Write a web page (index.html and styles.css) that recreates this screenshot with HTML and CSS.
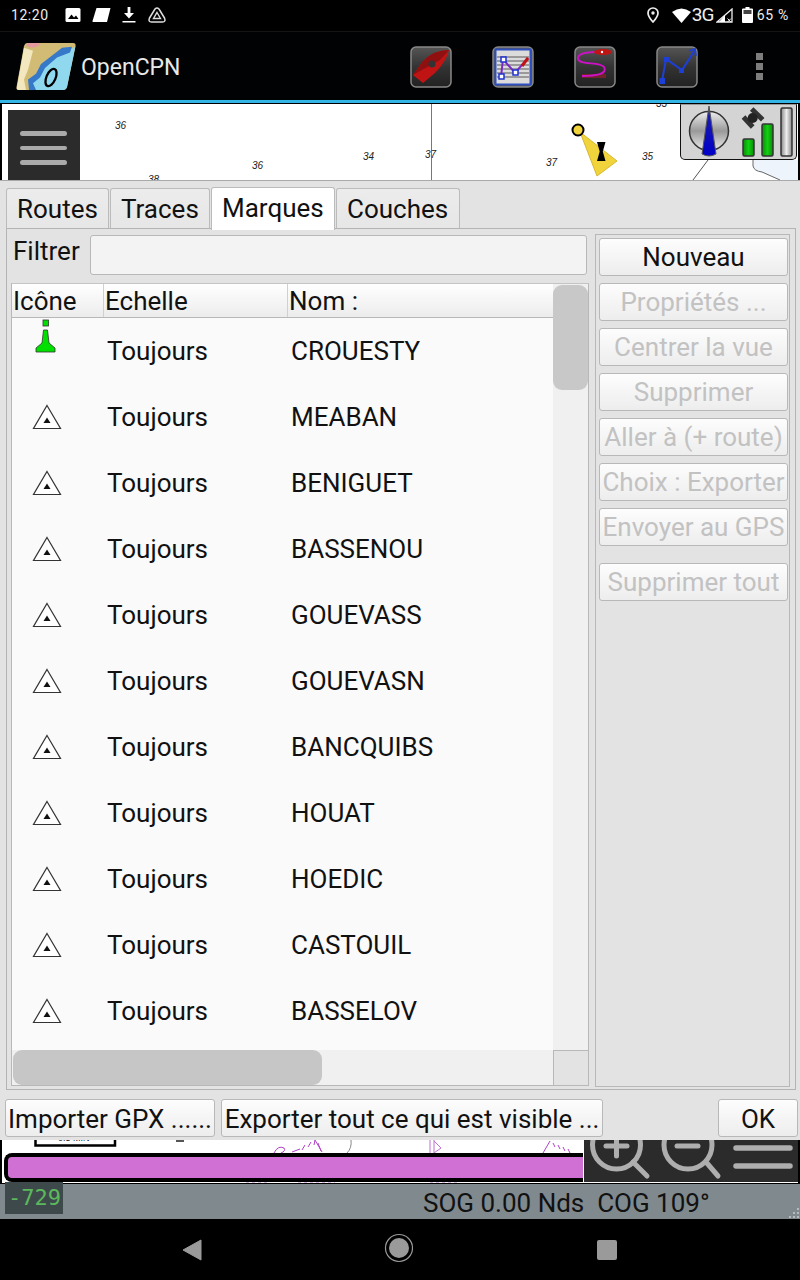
FILE: index.html
```html
<!DOCTYPE html>
<html lang="fr">
<head>
<meta charset="utf-8">
<title>OpenCPN</title>
<link rel="stylesheet" href="styles.css">
</head>
<body>
<svg class="defs" width="0" height="0">
  <symbol id="tri" viewBox="0 0 30 26">
    <path d="M15 1.500 L28.500 24.500 H1.500 Z" fill="#fff" stroke="#333" stroke-width="1.200"/>
    <path d="M15 13.500 L18.500 19 H11.500 Z" fill="#111"/>
  </symbol>
  <linearGradient id="gbtn" x1="0" y1="0" x2="0" y2="1"><stop offset="0" stop-color="#555"/><stop offset=".5" stop-color="#333"/><stop offset="1" stop-color="#222"/></linearGradient>
  <linearGradient id="gdial" x1="0" y1="0" x2="0" y2="1"><stop offset="0" stop-color="#eee"/><stop offset=".5" stop-color="#999"/><stop offset="1" stop-color="#eee"/></linearGradient>
  <linearGradient id="gbar" x1="0" y1="0" x2="1" y2="0"><stop offset="0" stop-color="#0a8a0a"/><stop offset=".5" stop-color="#11d011"/><stop offset="1" stop-color="#0a8a0a"/></linearGradient>
  <linearGradient id="gbar2" x1="0" y1="0" x2="1" y2="0"><stop offset="0" stop-color="#888"/><stop offset=".5" stop-color="#eee"/><stop offset="1" stop-color="#888"/></linearGradient>
  <linearGradient id="gneedle" x1="0" y1="0" x2="0" y2="1"><stop offset="0" stop-color="#555"/><stop offset=".2" stop-color="#1a1ab0"/><stop offset="1" stop-color="#0000c8"/></linearGradient>
</svg>

<header class="statusbar">
  <div class="status-left">
    <span class="clock">12:20</span>
    <svg class="si" width="16" height="16" viewBox="0 0 16 16"><rect x="0.500" y="1" width="15" height="14" rx="1.500" fill="#fff"/><path d="M3 12 L6.500 7.500 L9 10.500 L11 8.500 L13.500 12 Z" fill="#000"/></svg>
    <svg class="si" width="19" height="16" viewBox="0 0 19 16"><path d="M4.500 1 H18.500 L15 15 H1 Q0.300 15 .5 14 Z" fill="#fff"/></svg>
    <svg class="si" width="14" height="16" viewBox="0 0 14 16"><path d="M5.600 0 H8.400 V6 H12 L7 11.500 L2 6 H5.600 Z M0.500 14 H13.500 V15.500 H0.500 Z" fill="#fff"/></svg>
    <svg class="si" width="18" height="16" viewBox="0 0 18 16"><path d="M7 2 Q9 0 11 2 L16.500 11 Q18 15 14.500 15 H3.500 Q0 15 1.500 11 Z" fill="none" stroke="#ddd" stroke-width="1.500" stroke-linejoin="round"/><path d="M9 5.500 L12.500 11.500 H5.500 Z" fill="none" stroke="#ddd" stroke-width="1.400"/></svg>
  </div>
  <div class="status-right">
    <svg class="s-pin" width="12" height="16" viewBox="0 0 12 16"><path d="M6 1 C3 1 1 3.300 1 6 C1 9.500 6 15 6 15 C6 15 11 9.500 11 6 C11 3.300 9 1 6 1 Z" fill="none" stroke="#eee" stroke-width="1.700"/><circle cx="6" cy="6" r="1.700" fill="#eee"/></svg>
    <svg class="s-wifi" width="19" height="15" viewBox="0 0 19 15"><path d="M0 4 Q9.500 -3 19 4 L9.500 15 Z" fill="#fff"/></svg>
    <span class="g3">3G</span>
    <svg class="s-sig" width="17" height="15" viewBox="0 0 17 15"><path d="M16 1 V14 H1 Z" fill="none" stroke="#eee" stroke-width="1.300"/><path d="M9 7 V14 H3 Z" fill="#fff"/><path d="M11.500 10.500 L15 14 M15 10.500 L11.500 14" stroke="#eee" stroke-width="1"/></svg>
    <svg class="s-bat" width="11" height="16" viewBox="0 0 11 16"><path d="M3.500 0 H7.500 V1.500 H10 Q11 1.500 11 2.500 V15 Q11 16 10 16 H1 Q0 16 0 15 V2.500 Q0 1.500 1 1.500 H3.500 Z" fill="#fff"/><rect x="1.500" y="3" width="8" height="4" fill="#444"/></svg>
    <span class="batt">65 %</span>
  </div>
</header>

<div class="appbar">
  <svg class="logo" width="60" height="47" viewBox="0 0 60 49" preserveAspectRatio="none">
    <path d="M11 0 H57 Q60 0 59.500 3 L51 46 Q50 49 47 49 H3 Q0 49 .5 46 L8 3 Q9 0 11 0 Z" fill="#d2bb74"/>
    <path d="M1 46 L8 5 L17 8 L12 28 L8 38 L10 49 H3 Q0 49 1 46 Z" fill="#f2e7bf"/>
    <path d="M58 5 L40 14 L27 26 L22 36 L14 42 L17 49 H47 Q50 49 51 46 L59.500 3 Z" fill="#8fd8ee"/>
    <path d="M56 4 L46 5 L40 10 L25 22 L20 32 L12 38 L13 49 H20 L17 42 L24 36 L29 26 L41 15 L54 10 Z" fill="#3679c9"/>
    <path d="M10 2 Q16 8 25 1 L20 0 H12 Z" fill="#e59aa0"/>
    <ellipse cx="35" cy="36" rx="4.600" ry="9.500" transform="rotate(22 35 36)" fill="none" stroke="#000" stroke-width="2.300"/>
  </svg>
  <span class="app-title">OpenCPN</span>
  <div class="tools">
    <svg class="tool" width="42" height="42" viewBox="0 0 42 42"><rect x="1" y="1" width="40" height="40" rx="5" fill="url(#gbtn)" stroke="#888" stroke-width="1.500"/><path d="M39 4 Q24 4 13 15 L3 29 L13 37 L25 27 Q36 16 39 4 Z" fill="#c01414"/><path d="M39 4 Q24 4 13 15 L3 29 L30 14 Z" fill="#8f1010"/><circle cx="22" cy="18" r="3.500" fill="#333"/></svg>
    <svg class="tool" width="42" height="42" viewBox="0 0 42 42"><rect x="1" y="1" width="40" height="40" rx="5" fill="#555" stroke="#888" stroke-width="1.500"/><rect x="3.500" y="3.500" width="35" height="35" fill="#dcdcdc" stroke="#2f4fc0" stroke-width="2"/><path d="M5 11 H37 M5 15 H37 M5 19 H37 M5 23 H37 M5 27 H37 M5 31 H37" stroke="#9a9a9a" stroke-width="1.800"/><path d="M9 31 L11 13 L23 27 L36 12" fill="none" stroke="#7c28c8" stroke-width="2"/><path d="M30 20 L36 12" stroke="#c01414" stroke-width="3"/><rect x="7" y="28" width="5" height="5" fill="#fff" stroke="#2030d0" stroke-width="1.500"/><rect x="9" y="11" width="5" height="5" fill="#fff" stroke="#2030d0" stroke-width="1.500"/><rect x="21" y="24" width="5" height="5" fill="#fff" stroke="#2030d0" stroke-width="1.500"/></svg>
    <svg class="tool" width="42" height="42" viewBox="0 0 42 42"><rect x="1" y="1" width="40" height="40" rx="5" fill="url(#gbtn)" stroke="#888" stroke-width="1.500"/><path d="M8 30 H32" stroke="#a0202a" stroke-width="4" opacity=".6"/><path d="M8 30 C22 30 34 28 30 21 C26 15 4 20 4 12 C4 7 16 6 24 6" fill="none" stroke="#d010c8" stroke-width="2"/><ellipse cx="29" cy="6" rx="9" ry="3" fill="#c01414"/><circle cx="28" cy="6" r="1.200" fill="#fff"/></svg>
    <svg class="tool" width="42" height="42" viewBox="0 0 42 42"><rect x="1" y="1" width="40" height="40" rx="5" fill="url(#gbtn)" stroke="#888" stroke-width="1.500"/><path d="M6 35 L10 13 L26 24 L39 4" fill="none" stroke="#1c3fd8" stroke-width="2"/><path d="M33 5 L39 3 L40 10" fill="none" stroke="#1c3fd8" stroke-width="1.800"/><rect x="3.500" y="32" width="5.500" height="6" fill="#1c3fd8"/><rect x="8" y="11" width="5" height="5" fill="#1c3fd8"/><rect x="23" y="22" width="5" height="5" fill="#1c3fd8"/></svg>
    <span class="overflow"><i></i><i></i><i></i></span>
  </div>
</div>
<div class="accent"></div>

<div class="chart-top">
  <div class="menu-panel"><i></i><i></i><i></i></div>
  <span class="meridian"></span>
  <span class="sound s1">36</span><span class="sound s2">36</span><span class="sound s3">34</span><span class="sound s4">37</span><span class="sound s5">37</span><span class="sound s6">35</span><span class="sound s7">33</span><span class="sound s8">38</span>
  <svg class="buoy" width="56" height="60" viewBox="0 0 56 60">
    <path d="M14 12 L51 41 L31 56 Z" fill="#f1d33c" stroke="#d8b92e" stroke-width="1"/>
    <path d="M31 22 H39.500 L36.800 31.500 L39.500 41 H31 L33.700 31.500 Z" fill="#000"/>
    <circle cx="12" cy="10" r="5.500" fill="#f1d33c" stroke="#000" stroke-width="2"/>
  </svg>
  <svg class="coast" width="116" height="28" viewBox="0 0 116 28">
    <path d="M71 8 V14 Q72 19 80 20 L98 28 H116 V8 Z" fill="#eef4fc"/>
    <path d="M71 8 V14 Q72 19 80 20 L98 28" fill="none" stroke="#666" stroke-width="1"/>
    <path d="M26 8 L11 28" fill="none" stroke="#555" stroke-width="1"/>
  </svg>
  <div class="gps-panel">
    <svg width="115" height="54" viewBox="0 0 115 54">
      <circle cx="28" cy="26" r="19.500" fill="url(#gdial)" stroke="#333" stroke-width="1.500"/>
      <path d="M28 1 L35 49 Q28 53 21 49 Z" fill="url(#gneedle)" stroke="#555" stroke-width="1"/>
      <path d="M62.500 12 L71.700 22 M70.700 4 L81.700 14.700" stroke="#333" stroke-width="5"/>
      <circle cx="71.700" cy="13" r="5" fill="#222"/>
      <rect x="62" y="34" width="11" height="17" rx="1.500" fill="url(#gbar)" stroke="#333" stroke-width="1.500"/>
      <rect x="81" y="19" width="11" height="32" rx="1.500" fill="url(#gbar)" stroke="#333" stroke-width="1.500"/>
      <rect x="100" y="3" width="11" height="48" rx="1.500" fill="url(#gbar2)" stroke="#333" stroke-width="1.500"/>
    </svg>
  </div>
</div>

<main class="dialog">
  <nav class="tabs">
    <span class="tab">Routes</span><span class="tab">Traces</span><span class="tab active">Marques</span><span class="tab">Couches</span>
  </nav>
  <section class="panel">
    <div class="left-col">
      <div class="filter">
        <label class="filter-label">Filtrer</label>
        <div class="filter-input"></div>
      </div>
      <div class="list">
        <div class="list-main">
          <div class="list-view">
            <div class="list-head">
              <span class="h-icon">Icône</span><span class="h-scale">Echelle</span><span class="h-name">Nom :</span>
            </div>
            <div class="row">
              <span class="c-icon"><svg class="green" width="22" height="34" viewBox="0 0 22 34"><rect x="8" y="1" width="5.500" height="6" fill="#00e000" stroke="#333" stroke-width=".8"/><path d="M8.500 11 H12.500 L14 24 L20 29 V33 H1 V29 L7 24 Z" fill="#00e000" stroke="#333" stroke-width=".8"/></svg></span>
              <span class="c-scale">Toujours</span><span class="c-name">CROUESTY</span>
            </div>
            <div class="row"><span class="c-icon"><svg class="mark" width="30" height="26"><use href="#tri"/></svg></span><span class="c-scale">Toujours</span><span class="c-name">MEABAN</span></div>
            <div class="row"><span class="c-icon"><svg class="mark" width="30" height="26"><use href="#tri"/></svg></span><span class="c-scale">Toujours</span><span class="c-name">BENIGUET</span></div>
            <div class="row"><span class="c-icon"><svg class="mark" width="30" height="26"><use href="#tri"/></svg></span><span class="c-scale">Toujours</span><span class="c-name">BASSENOU</span></div>
            <div class="row"><span class="c-icon"><svg class="mark" width="30" height="26"><use href="#tri"/></svg></span><span class="c-scale">Toujours</span><span class="c-name">GOUEVASS</span></div>
            <div class="row"><span class="c-icon"><svg class="mark" width="30" height="26"><use href="#tri"/></svg></span><span class="c-scale">Toujours</span><span class="c-name">GOUEVASN</span></div>
            <div class="row"><span class="c-icon"><svg class="mark" width="30" height="26"><use href="#tri"/></svg></span><span class="c-scale">Toujours</span><span class="c-name">BANCQUIBS</span></div>
            <div class="row"><span class="c-icon"><svg class="mark" width="30" height="26"><use href="#tri"/></svg></span><span class="c-scale">Toujours</span><span class="c-name">HOUAT</span></div>
            <div class="row"><span class="c-icon"><svg class="mark" width="30" height="26"><use href="#tri"/></svg></span><span class="c-scale">Toujours</span><span class="c-name">HOEDIC</span></div>
            <div class="row"><span class="c-icon"><svg class="mark" width="30" height="26"><use href="#tri"/></svg></span><span class="c-scale">Toujours</span><span class="c-name">CASTOUIL</span></div>
            <div class="row"><span class="c-icon"><svg class="mark" width="30" height="26"><use href="#tri"/></svg></span><span class="c-scale">Toujours</span><span class="c-name">BASSELOV</span></div>
          </div>
          <div class="vscroll"><div class="vthumb"></div></div>
        </div>
        <div class="list-foot">
          <div class="hscroll"><div class="hthumb"></div></div>
          <div class="corner"></div>
        </div>
      </div>
    </div>
    <aside class="actions">
      <button class="btn">Nouveau</button>
      <button class="btn off">Propriétés ...</button>
      <button class="btn off">Centrer la vue</button>
      <button class="btn off">Supprimer</button>
      <button class="btn off">Aller à (+ route)</button>
      <button class="btn off">Choix : Exporter</button>
      <button class="btn off">Envoyer au GPS</button>
      <button class="btn off spaced">Supprimer tout</button>
    </aside>
  </section>
  <div class="bottom-buttons">
    <button class="btn import">Importer GPX ......</button>
    <button class="btn export">Exporter tout ce qui est visible ...</button>
    <button class="btn ok">OK</button>
  </div>
</main>

<div class="chart-bottom">
  <svg class="chart-lines" width="584" height="44" viewBox="0 0 584 44">
    <path d="M33.500 0 V5.500 H113 V0" fill="none" stroke="#000" stroke-width="2.500"/>
    <path d="M174 1 H182" stroke="#555" stroke-width="2"/>
    <path d="M272 13 Q276 5 282 8 Q284 11 279 13 M290 12 L298 9 M300 10 L303 5 M306 7 L309 2 M312 5 L313 0 M316 3 L319 11 M313 0 L320 12" fill="none" stroke="#b040c8" stroke-width="1"/>
    <path d="M349 0 Q350 8 345 13" fill="none" stroke="#888" stroke-width="1"/>
    <path d="M428 0 V13 M432 0 V13 M432 1 L439 8 L432 13" fill="none" stroke="#c070d0" stroke-width="1"/>
    <path d="M541 13 L548 1 M551 3 L553 7 M556 5 L558 9 M561 7 L563 11 M566 9 L568 13" fill="none" stroke="#b040c8" stroke-width="1"/>
    <path d="M244 42 H268 M296 42 H333 M428 42 H456" stroke="#c080d8" stroke-width="1" stroke-dasharray="3 3"/>
  </svg>
  <span class="min-label">0.5 MIN</span>
  <div class="progress"></div>
  <div class="zoom-panel">
    <svg width="214" height="42" viewBox="0 0 214 42">
      <g fill="none" stroke="#aeaeae" stroke-width="5" stroke-linecap="round">
        <circle cx="32.500" cy="5" r="24"/><path d="M49 22 L63 36"/>
        <path d="M22 6 H43 M32.500 -4 V16"/>
        <circle cx="104" cy="5" r="24"/><path d="M122 22 L134 36"/>
        <path d="M93 6 H114"/>
        <path d="M152 8 H206 M152 26 H206" stroke-width="5.500"/>
      </g>
    </svg>
  </div>
</div>

<div class="infobar">
  <span class="depth">-729</span>
  <span class="sog">SOG 0.00 Nds&nbsp; COG 109°</span>
  <svg class="grip" width="14" height="12" viewBox="0 0 14 12"><path d="M12 1 h2 v2 h-2z M8 5 h2 v2 h-2z M12 5 h2 v2 h-2z M4 9 h2 v2 h-2z M8 9 h2 v2 h-2z M12 9 h2 v2 h-2z" fill="#b5bcc0"/></svg>
</div>

<footer class="navbar">
  <svg class="nav-back" width="20" height="22" viewBox="0 0 20 22"><path d="M19 1 V21 L1 11 Z" fill="#9a9a9a" stroke="#9a9a9a" stroke-linejoin="round"/></svg>
  <svg class="nav-home" width="30" height="30" viewBox="0 0 30 30"><circle cx="15" cy="15" r="13.500" fill="none" stroke="#9a9a9a" stroke-width="1.200"/><circle cx="15" cy="15" r="10" fill="#9a9a9a"/></svg>
  <svg class="nav-recent" width="20" height="20" viewBox="0 0 20 20"><rect width="20" height="20" rx="2" fill="#9a9a9a"/></svg>
</footer>
</body>
</html>
```
FILE: styles.css
```css
* { box-sizing: border-box; }
html, body { margin: 0; padding: 0; }
body {
  width: 800px;
  height: 1280px;
  overflow: hidden;
  background: #000;
  font-family: Roboto, "Liberation Sans", sans-serif;
  color: #111;
}
.defs { position: absolute; }

/* status bar */
.statusbar {
  height: 32px;
  background: #000;
  border-bottom: 1px solid #141414;
  display: flex;
  align-items: center;
  justify-content: space-between;
  padding: 0 11px 1px 11px;
  color: #eee;
}
.status-left { display: flex; align-items: center; }
.clock { font-size: 14px; letter-spacing: .55px; width: 54px; }
.si { margin-right: 11px; flex: none; }
.si:nth-of-type(3) { margin-right: 12px; }
.status-right { display: flex; align-items: center; }
.s-pin { margin-right: 13px; }
.s-wifi { margin-right: 1px; }
.g3 { font-size: 19px; letter-spacing: -1px; width: 24px; line-height: 20px; }
.s-bat { margin-left: 9px; }
.batt { font-size: 14px; margin-left: 4px; letter-spacing: .7px; }

/* app bar */
.appbar {
  height: 68px;
  background: #010203;
  display: flex;
  align-items: center;
  padding-left: 16px;
}
.logo { flex: none; margin-top: 1px; }
.app-title {
  color: #e8e8e8;
  font-size: 23px;
  margin-left: 5px;
  margin-top: 2px;
}
.tools { display: flex; align-items: center; margin-left: auto; padding-right: 37px; }
.tool { flex: none; margin-right: 40px; margin-top: 1px; }
.overflow { display: flex; flex-direction: column; gap: 3px; margin-left: 18px; margin-top: 1px; }
.overflow i { display: block; width: 7px; height: 7px; background: #7d7d7d; }
.accent { height: 3px; background: #33b5e5; }

/* chart top */
.chart-top {
  height: 77px;
  position: relative;
  background: #fff;
  border-left: 1px solid #000;
  border-right: 1px solid #000;
  border-top: 1px solid #000;
  margin-left: 1px;
  margin-right: 1px;
  overflow: hidden;
}
.menu-panel {
  position: absolute;
  left: 6px;
  top: 6px;
  width: 72px;
  height: 72px;
  background: #2b2b2b;
  padding: 21px 13px 0 12px;
  display: flex;
  flex-direction: column;
  gap: 10px;
}
.menu-panel i { display: block; height: 4.500px; border-radius: 3px; background: #aaa; }
.meridian { position: absolute; left: 429px; top: 0; width: 1px; height: 77px; background: #777; }
.sound { position: absolute; font: italic 10px "Liberation Sans", sans-serif; color: #222; line-height: 10px; }
.s1 { left: 113px; top: 17px; }
.s2 { left: 250px; top: 57px; }
.s3 { left: 361px; top: 48px; }
.s4 { left: 423px; top: 46px; }
.s5 { left: 544px; top: 54px; }
.s6 { left: 640px; top: 48px; }
.s7 { left: 654px; top: -5px; }
.s8 { left: 146px; top: 71px; }
.buoy { position: absolute; left: 564px; top: 16px; }
.coast { position: absolute; left: 680px; top: 48px; }
.gps-panel {
  position: absolute;
  left: 678px;
  top: 0;
  width: 117px;
  height: 56px;
  background: #d4d4d4;
  border: 1px solid #111;
  border-top-color: #999;
  border-radius: 0 0 5px 5px;
}
.gps-panel svg { display: block; }

/* dialog */
.dialog {
  height: 960px;
  background: #e3e3e3;
  border-top: 1px solid #a9a9a9;
  display: flex;
  flex-direction: column;
  padding: 7px 0 0 0;
}
.tabs { display: flex; gap: 1px; padding-left: 6px; height: 41px; }
.tab {
  font-size: 26px;
  height: 41px;
  line-height: 41px;
  padding: 0 10px;
  background: linear-gradient(#ececec, #e6e6e6);
  border: 1px solid #bbb;
  border-bottom: none;
  border-radius: 3px 3px 0 0;
  color: #111;
  white-space: nowrap;
}
.tab:nth-child(1) { width: 103px; }
.tab:nth-child(2) { width: 100px; }
.tab:nth-child(3) { width: 124px; background: #fff; margin-top: -1px; height: 43px; position: relative; z-index: 1; }
.tab:nth-child(4) { width: 124px; }
.panel {
  height: 862px;
  margin: -1px 4px 0 6px;
  border: 1px solid #b4b4b4;
  display: flex;
  padding: 6px 5px 3px 3px;
  gap: 6px;
}
.left-col { width: 579px; display: flex; flex-direction: column; }
.filter { display: flex; height: 40px; }
.filter-label { font-size: 26px; width: 81px; padding-left: 3px; line-height: 33px; }
.filter-input {
  width: 497px;
  height: 40px;
  margin-left: -1px;
  background: #f3f3f3;
  border: 1px solid #b8b8b8;
  border-radius: 3px;
}
.list {
  margin-top: 8px;
  height: 803px;
  width: 578px;
  margin-left: 1px;
  border: 1px solid #b8b8b8;
  border-top-color: #c4c4c4;
  display: flex;
  flex-direction: column;
  background: #fafafa;
}
.list-main { height: 766px; display: flex; overflow: hidden; }
.list-view { width: 541px; flex: none; }
.list-head {
  height: 34px;
  display: flex;
  background: linear-gradient(#fff, #ececec);
  border-bottom: 1px solid #b8b8b8;
  font-size: 26px;
  line-height: 35px;
}
.list-head span { padding-left: 1px; white-space: nowrap; border-right: 1px solid #d0d0d0; }
.h-icon { width: 92px; }
.h-scale { width: 184px; }
.list-head .h-name { flex: 1; border-right: none; }
.row { height: 66px; display: flex; align-items: center; font-size: 26px; }
.c-icon { width: 92px; display: flex; flex: none; padding-left: 20px; }
.c-icon .green { margin-left: 3px; margin-top: -30px; }
.c-scale { width: 184px; padding-left: 3px; flex: none; }
.c-name { padding-left: 3px; }
.vscroll { width: 35px; background: #f0f0f0; padding-top: 1px; }
.vthumb { width: 35px; height: 105px; border-radius: 9px; background: #c8c8c8; }
.list-foot { height: 35px; display: flex; }
.hscroll { width: 541px; background: #f0f0f0; padding-left: 1px; }
.hthumb { width: 309px; height: 35px; border-radius: 9px; background: #c6c6c6; }
.corner { width: 35px; background: #e3e3e3; border-left: 1px solid #b8b8b8; border-top: 1px solid #b8b8b8; }
.actions {
  width: 196px;
  height: 853px;
  margin-top: -1px;
  border: 1px solid #b8b8b8;
  padding: 3px 1px 3px 3px;
  display: flex;
  flex-direction: column;
  gap: 7px;
}
.btn {
  font-family: Roboto, "Liberation Sans", sans-serif;
  font-size: 26px;
  height: 38px;
  padding: 0;
  background: linear-gradient(#fdfdfd, #ededed);
  border: 1px solid #b8b8b8;
  border-radius: 3px;
  color: #111;
  white-space: nowrap;
  flex: none;
}
.btn.off { color: #c2c2c2; }
.btn.spaced { margin-top: 10px; }
.bottom-buttons { display: flex; height: 38px; margin-top: 9px; padding-left: 5px; }
.import { width: 210px; padding-top: 2px; }
.export { width: 382px; margin-left: 6px; padding-top: 2px; }
.ok { width: 80px; margin-left: 115px; padding-top: 2px; }

/* chart bottom */
.chart-bottom {
  height: 44px;
  position: relative;
  margin: 0 1px;
  background: #fff;
  border: 1px solid #000;
  border-top: none;
  overflow: hidden;
}
.chart-lines { position: absolute; left: 0; top: 0; }
.min-label { position: absolute; left: 56px; top: -7px; font: 9px/10px "Liberation Sans", sans-serif; color: #222; }
.progress {
  position: absolute;
  left: 2px;
  top: 13px;
  width: 579px;
  height: 29px;
  background: #d070d4;
  border: 4px solid #000;
  border-right: none;
  border-radius: 8px 0 0 8px;
}
.zoom-panel { position: absolute; left: 582px; top: 0; width: 214px; height: 42px; background: #2b2b2b; overflow: hidden; }
.zoom-panel svg { display: block; }

/* info bar */
.infobar {
  height: 35px;
  background: #7f898e;
  position: relative;
  display: flex;
  align-items: center;
  padding-top: 3px;
}
.depth {
  position: absolute;
  left: 5px;
  top: -2px;
  width: 58px;
  height: 32px;
  background: #3e494b;
  color: #5cb85c;
  font: 22px/31px "DejaVu Sans Mono", monospace;
  padding-left: 3px;
}
.sog { font-size: 26px; margin-left: 423px; color: #111; white-space: nowrap; }
.grip { position: absolute; right: 1px; bottom: 0; }

/* nav */
.navbar { height: 61px; background: #000; display: flex; align-items: center; padding-left: 182px; }
.nav-back { margin-right: 182px; margin-top: 1px; }
.nav-home { margin-right: 183px; margin-top: -3px; }
.nav-recent { margin-top: 1px; }
```
